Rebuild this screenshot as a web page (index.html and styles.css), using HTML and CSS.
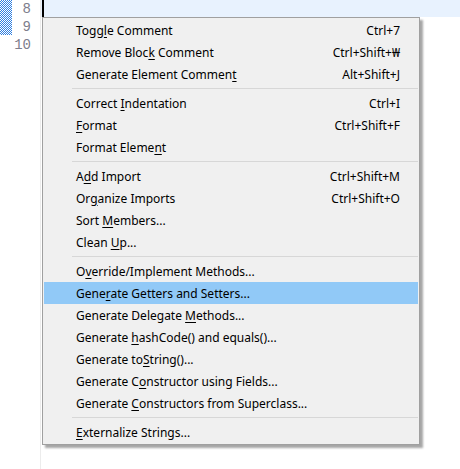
FILE: index.html
```html
<!DOCTYPE html>
<html>
<head>
<meta charset="utf-8">
<link rel="stylesheet" href="styles.css">
</head>
<body>
<div class="editor">
  <div class="gutter">
    <div class="hatch"></div>
    <div class="numbers">
      <div class="ln">8</div>
      <div class="ln">9</div>
      <div class="ln">10</div>
    </div>
  </div>
  <div class="code">
    <div class="line current"><span class="caret"></span></div>
  </div>
  <div class="menu">
    <div class="item"><span class="label">Togg<u>l</u>e Comment</span><span class="key">Ctrl+7</span></div>
    <div class="item"><span class="label">Remove Bloc<u>k</u> Comment</span><span class="key">Ctrl+Shift+₩</span></div>
    <div class="item"><span class="label">Generate Element Commen<u>t</u></span><span class="key">Alt+Shift+J</span></div>
    <div class="sep"></div>
    <div class="item"><span class="label">Correct <u>I</u>ndentation</span><span class="key">Ctrl+I</span></div>
    <div class="item"><span class="label"><u>F</u>ormat</span><span class="key">Ctrl+Shift+F</span></div>
    <div class="item"><span class="label">Format Eleme<u>n</u>t</span></div>
    <div class="sep"></div>
    <div class="item"><span class="label">A<u>d</u>d Import</span><span class="key">Ctrl+Shift+M</span></div>
    <div class="item"><span class="label">Or<u>g</u>anize Imports</span><span class="key">Ctrl+Shift+O</span></div>
    <div class="item"><span class="label">Sort <u>M</u>embers...</span></div>
    <div class="item"><span class="label">Clean <u>U</u>p...</span></div>
    <div class="sep"></div>
    <div class="item"><span class="label">O<u>v</u>erride/Implement Methods...</span></div>
    <div class="item active"><span class="label">Gene<u>r</u>ate Getters and Setters...</span></div>
    <div class="item"><span class="label">Generate Delegate <u>M</u>ethods...</span></div>
    <div class="item"><span class="label">Generate <u>h</u>ashCode() and equals()...</span></div>
    <div class="item"><span class="label">Generate to<u>S</u>tring()...</span></div>
    <div class="item"><span class="label">Generate C<u>o</u>nstructor using Fields...</span></div>
    <div class="item"><span class="label">Generate <u>C</u>onstructors from Superclass...</span></div>
    <div class="sep"></div>
    <div class="item"><span class="label"><u>E</u>xternalize Strings...</span></div>
  </div>
</div>
</body>
</html>
```
FILE: styles.css
```css
html, body {
  margin: 0;
  padding: 0;
  background: #ffffff;
}
.editor {
  position: relative;
  display: flex;
  width: 460px;
  height: 469px;
  overflow: hidden;
}
.gutter {
  position: relative;
  width: 40px;
  flex: none;
  border-right: 1px solid #ececec;
  display: flex;
}
.hatch {
  width: 12px;
  height: 35px;
  background: repeating-conic-gradient(#2f7fe0 0 25%, #ffffff 0 50%);
  background-size: 2px 2px;
}
.numbers {
  flex: 1;
  font-family: "Liberation Mono", monospace;
  font-size: 14px;
  color: #7d7d8c;
  text-align: right;
  padding-right: 9px;
}
.ln {
  height: 18px;
  line-height: 18px;
}
.code {
  flex: 1;
}
.line {
  height: 17px;
  display: flex;
}
.current {
  background: #e8f2fe;
}
.caret {
  width: 2px;
  margin-left: 1px;
  background: #000;
}
.menu {
  position: absolute;
  left: 42px;
  top: 17px;
  width: 374px;
  padding: 1px 1px;
  border: 1px solid #a0a0a0;
  background: #f0f0f0;
  box-shadow: 3px 3px 2px rgba(0, 0, 0, 0.35);
  font-family: "Noto Sans", sans-serif;
  font-size: 12px;
  color: #000;
}
.item {
  display: flex;
  justify-content: space-between;
  align-items: center;
  height: 22px;
  padding: 0 18px 0 32px;
}
.item.active {
  background: #91c9f7;
}
.label u {
  text-decoration: underline;
  text-underline-offset: 2px;
}
.sep {
  height: 1px;
  margin: 3px 0 3px 28px;
  background: #d7d7d7;
}
```
